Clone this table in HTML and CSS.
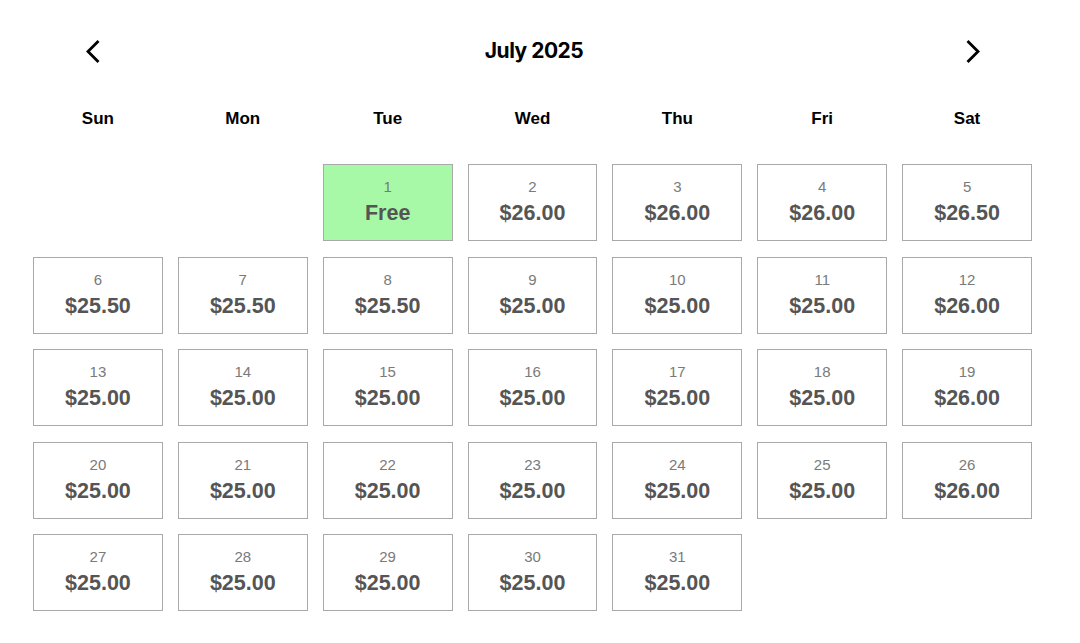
FILE: index.html
```html
<!DOCTYPE html>
<html lang="en">
<head>
<meta charset="utf-8">
<title>July 2025</title>
<link rel="stylesheet" href="styles.css">
</head>
<body>
<div class="calendar">
  <div class="cal-header">
    <button class="nav-btn" aria-label="Previous month">
      <svg width="16" height="24" viewBox="0 0 16 24"><path d="M12.5 3 L3 12.5 L12.5 22" fill="none" stroke="#000" stroke-width="2.8" stroke-linecap="square" stroke-linejoin="miter"/></svg>
    </button>
    <h1 class="month-title">July 2025</h1>
    <button class="nav-btn" aria-label="Next month">
      <svg width="16" height="24" viewBox="0 0 16 24"><path d="M3.5 3 L13 12.5 L3.5 22" fill="none" stroke="#000" stroke-width="2.8" stroke-linecap="square" stroke-linejoin="miter"/></svg>
    </button>
  </div>
  <div class="weekdays">
    <div>Sun</div><div>Mon</div><div>Tue</div><div>Wed</div><div>Thu</div><div>Fri</div><div>Sat</div>
  </div>
  <div class="days">
    <div class="empty"></div>
    <div class="empty"></div>
    <div class="day free"><span class="num">1</span><span class="price">Free</span></div>
    <div class="day"><span class="num">2</span><span class="price">$26.00</span></div>
    <div class="day"><span class="num">3</span><span class="price">$26.00</span></div>
    <div class="day"><span class="num">4</span><span class="price">$26.00</span></div>
    <div class="day"><span class="num">5</span><span class="price">$26.50</span></div>
    <div class="day"><span class="num">6</span><span class="price">$25.50</span></div>
    <div class="day"><span class="num">7</span><span class="price">$25.50</span></div>
    <div class="day"><span class="num">8</span><span class="price">$25.50</span></div>
    <div class="day"><span class="num">9</span><span class="price">$25.00</span></div>
    <div class="day"><span class="num">10</span><span class="price">$25.00</span></div>
    <div class="day"><span class="num">11</span><span class="price">$25.00</span></div>
    <div class="day"><span class="num">12</span><span class="price">$26.00</span></div>
    <div class="day"><span class="num">13</span><span class="price">$25.00</span></div>
    <div class="day"><span class="num">14</span><span class="price">$25.00</span></div>
    <div class="day"><span class="num">15</span><span class="price">$25.00</span></div>
    <div class="day"><span class="num">16</span><span class="price">$25.00</span></div>
    <div class="day"><span class="num">17</span><span class="price">$25.00</span></div>
    <div class="day"><span class="num">18</span><span class="price">$25.00</span></div>
    <div class="day"><span class="num">19</span><span class="price">$26.00</span></div>
    <div class="day"><span class="num">20</span><span class="price">$25.00</span></div>
    <div class="day"><span class="num">21</span><span class="price">$25.00</span></div>
    <div class="day"><span class="num">22</span><span class="price">$25.00</span></div>
    <div class="day"><span class="num">23</span><span class="price">$25.00</span></div>
    <div class="day"><span class="num">24</span><span class="price">$25.00</span></div>
    <div class="day"><span class="num">25</span><span class="price">$25.00</span></div>
    <div class="day"><span class="num">26</span><span class="price">$26.00</span></div>
    <div class="day"><span class="num">27</span><span class="price">$25.00</span></div>
    <div class="day"><span class="num">28</span><span class="price">$25.00</span></div>
    <div class="day"><span class="num">29</span><span class="price">$25.00</span></div>
    <div class="day"><span class="num">30</span><span class="price">$25.00</span></div>
    <div class="day"><span class="num">31</span><span class="price">$25.00</span></div>
  </div>
</div>
</body>
</html>
```

FILE: styles.css
```css
* { box-sizing: border-box; }
html, body { margin: 0; padding: 0; background: #fff; }
body { font-family: "Liberation Sans", Arial, sans-serif; color: #000; }

.calendar {
  width: 999px;
  margin-left: 33px;
  padding-top: 30px;
}

.cal-header {
  display: flex;
  align-items: center;
  justify-content: space-between;
  height: 42px;
  padding: 0 51px 0 52px;
}

.nav-btn {
  border: 0;
  background: none;
  padding: 0;
  width: 16px;
  height: 24px;
  display: flex;
  cursor: pointer;
}

.month-title {
  margin: 0;
  font-family: Inter, "Liberation Sans", sans-serif;
  font-weight: 700;
  font-size: 21px;
  letter-spacing: -0.5px;
  line-height: 42px;
  padding-left: 2px;
}

.weekdays {
  display: grid;
  grid-template-columns: repeat(7, 1fr);
  column-gap: 15px;
  margin-top: 34px;
  height: 26px;
  margin-bottom: 32px;
}
.weekdays div {
  text-align: center;
  font-weight: 700;
  font-size: 17px;
  line-height: 26px;
}

.days {
  display: grid;
  grid-template-columns: repeat(7, 1fr);
  grid-auto-rows: 77px;
  column-gap: 15px;
  row-gap: 15.5px;
}

.day {
  border: 1px solid #a9a9a9;
  background: #fff;
  display: flex;
  flex-direction: column;
  align-items: center;
  padding-top: 13px;
}
.day.free { background: #a7f8a7; }

.num {
  font-size: 15px;
  line-height: 18px;
  color: #7a7a7a;
}
.price {
  margin-top: 4px;
  font-size: 21.5px;
  line-height: 26px;
  font-weight: 700;
  color: #555;
}
```
